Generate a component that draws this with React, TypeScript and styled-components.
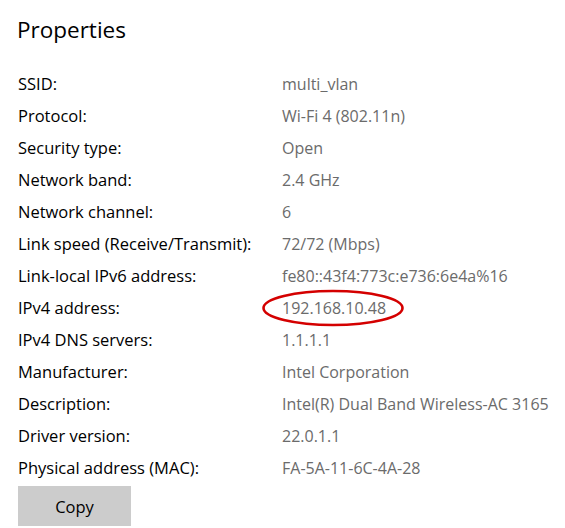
import React from "react";
import styled, { createGlobalStyle } from "styled-components";

const Global = createGlobalStyle`
  html, body { margin: 0; padding: 0; background: #ffffff; }
  body { font-family: "Open Sans", "Noto Sans", Arial, sans-serif; }
`;

const Page = styled.div`
  width: 565px;
  height: 528px;
  box-sizing: border-box;
  padding: 16px 0 0 18px;
  overflow: hidden;
  background: #ffffff;
`;

const Title = styled.h2`
  margin: 0 0 24px -1px;
  font-size: 22.5px;
  line-height: 28px;
  font-weight: 400;
  color: #000000;
`;

const Grid = styled.div`
  display: grid;
  grid-template-columns: 264px 1fr;
  grid-auto-rows: 32px;
  line-height: 32px;
`;

const Label = styled.div`
  color: #000000;
  font-size: 16.5px;
  white-space: nowrap;
`;

const Value = styled.div`
  color: #6b6b6b;
  font-size: 16px;
  white-space: nowrap;
  position: relative;
`;

const Circle = styled.svg`
  position: absolute;
  left: -20px;
  top: -4px;
  width: 144px;
  height: 40px;
  overflow: visible;
  pointer-events: none;
`;

const CopyButton = styled.button`
  margin-top: 2px;
  width: 113px;
  height: 40px;
  border: none;
  background: #cccccc;
  color: #000000;
  font-family: "Open Sans", "Noto Sans", Arial, sans-serif;
  font-size: 16.5px;
  padding: 0;
`;

const rows: [string, string][] = [
  ["SSID:", "multi_vlan"],
  ["Protocol:", "Wi-Fi 4 (802.11n)"],
  ["Security type:", "Open"],
  ["Network band:", "2.4 GHz"],
  ["Network channel:", "6"],
  ["Link speed (Receive/Transmit):", "72/72 (Mbps)"],
  ["Link-local IPv6 address:", "fe80::43f4:773c:e736:6e4a%16"],
  ["IPv4 address:", "192.168.10.48"],
  ["IPv4 DNS servers:", "1.1.1.1"],
  ["Manufacturer:", "Intel Corporation"],
  ["Description:", "Intel(R) Dual Band Wireless-AC 3165"],
  ["Driver version:", "22.0.1.1"],
  ["Physical address (MAC):", "FA-5A-11-6C-4A-28"],
];

export default function App() {
  return (
    <Page>
      <Global />
      <Title>Properties</Title>
      <Grid>
        {rows.map(([k, v]) => (
          <React.Fragment key={k}>
            <Label>{k}</Label>
            <Value>
              {v}
              {k === "IPv4 address:" && (
                <Circle viewBox="0 0 144 40">
                  <ellipse cx="71" cy="20" rx="69.5" ry="17" fill="none" stroke="#d40000" strokeWidth="2.6" />
                </Circle>
              )}
            </Value>
          </React.Fragment>
        ))}
      </Grid>
      <CopyButton>Copy</CopyButton>
    </Page>
  );
}
